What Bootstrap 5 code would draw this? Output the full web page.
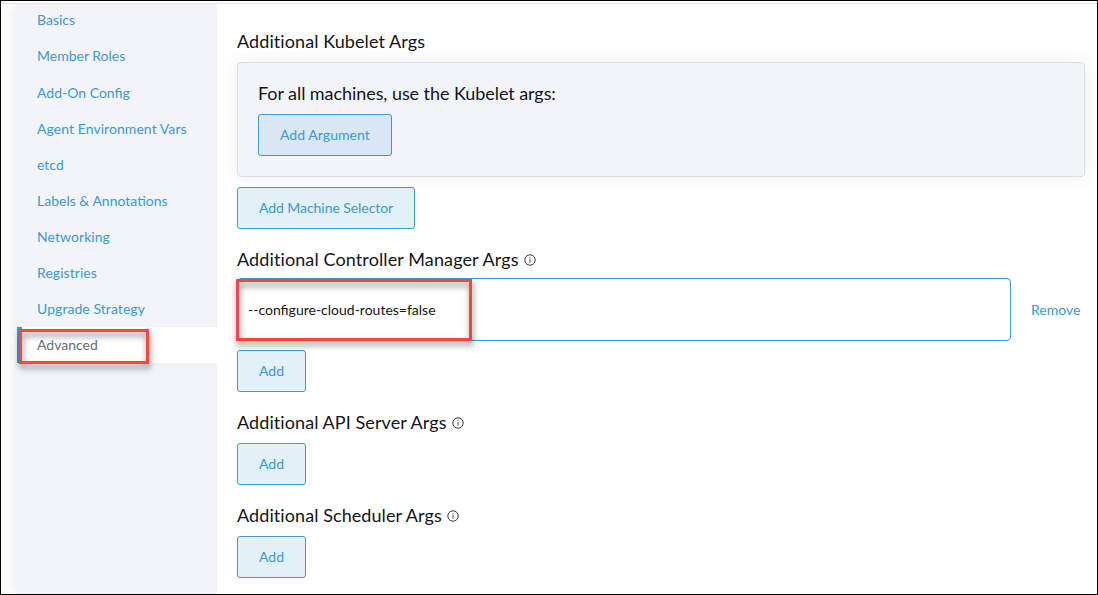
<!DOCTYPE html>
<html lang="en">
<head>
<meta charset="utf-8">
<meta name="viewport" content="width=device-width, initial-scale=1">
<title>Cluster Configuration - Advanced</title>
<link href="https://cdn.jsdelivr.net/npm/bootstrap@5.3.0/dist/css/bootstrap.min.css" rel="stylesheet">
<style>
  body { font-family: Lato, "Liberation Sans", sans-serif; font-size: 14px; color: #141419; line-height: 21px; }
  .frame { height: 595px; border: 1px solid #000; }
  .top-rule { height: 1px; margin-top: 2px; background: #e9dfec; flex: none; }
  .side-tabs { width: 200px; margin-left: 16px; background: #f3f4fa; box-shadow: 0 0 20px rgba(0,0,0,.11); clip-path: inset(0 0 0 -16px); }
  .side-tabs .nav-link { height: 36px; padding: 0 0 0 20px; line-height: 36px; color: #3d98d3; }
  .side-tabs .nav-link:first-child { margin-top: -1px; }
  .side-tabs .nav-link.early { line-height: 34px; }
  .side-tabs .nav-link.wide { letter-spacing: .06px; }
  .side-tabs .nav-link.active { background: #fff; color: #6c6c76; border-left: 5px solid #3d98d3; padding-left: 15px; margin-top: 0; }
  .pane { padding: 26px 12px 0 20px; }
  .pane h3 { font-size: 18px; font-weight: 400; line-height: 22px; margin: 0; letter-spacing: .08px; }
  .pane h3 svg { width: 12px; height: 12px; margin: 2px 0 0 5px; flex: none; }
  .pane .arg-title { letter-spacing: .11px; }
  .machine-box { height: 115px; margin-top: 10px; padding: 19px 20px; background: #f3f4fa; border: 1px solid #dcdee7; border-radius: 4px; box-shadow: 0 0 20px rgba(0,0,0,.08); }
  .machine-box h3 { letter-spacing: -.07px; margin-bottom: 10px; }
  .btn-soft { --bs-btn-color: #3d98d3; --bs-btn-bg: #e2f0f8; --bs-btn-border-color: #3d98d3; --bs-btn-hover-color: #fff; --bs-btn-hover-bg: #3d98d3; --bs-btn-font-size: 14px; --bs-btn-padding-x: 21px; --bs-btn-padding-y: 0; --bs-btn-border-radius: 3px; display: block; height: 42px; line-height: 40px; margin-top: 10px; }
  .btn-inner { --bs-btn-bg: #d9e7f4; letter-spacing: .05px; margin-top: 0; }
  .btn-selector { letter-spacing: -.06px; }
  .arg-row + .btn-soft { margin-top: 9px; }
  .arg-input { height: 63px; border: 1px solid #3d98d3; border-radius: 4px; padding: 0 10px; font-size: 14px; color: #141419; }
  .remove-link { width: 74px; padding-left: 20px; color: #3d98d3; }
  .section { margin-top: 19px; }
  .callout { position: absolute; border: 3px solid #ff4343; filter: drop-shadow(1px 4px 3px rgba(0,0,0,.5)); pointer-events: none; }
  .callout-tab { left: 2px; top: 2px; width: 130px; height: 35px; }
  .callout-arg { left: -1px; top: 1px; width: 236px; height: 62px; }
</style>
</head>
<body>
<main class="frame d-flex flex-column overflow-hidden bg-white">
  <div class="top-rule"></div>
  <div class="d-flex flex-grow-1">
    <nav class="side-tabs nav flex-column flex-nowrap flex-shrink-0">
      <a class="nav-link early" href="#">Basics</a>
      <a class="nav-link early" href="#">Member Roles</a>
      <a class="nav-link" href="#">Add-On Config</a>
      <a class="nav-link wide" href="#">Agent Environment Vars</a>
      <a class="nav-link" href="#">etcd</a>
      <a class="nav-link" href="#">Labels &amp; Annotations</a>
      <a class="nav-link wide" href="#">Networking</a>
      <a class="nav-link wide" href="#">Registries</a>
      <a class="nav-link wide" href="#">Upgrade Strategy</a>
      <div class="position-relative">
        <a class="nav-link active" href="#">Advanced</a>
        <span class="callout callout-tab"></span>
      </div>
    </nav>
    <div class="pane flex-grow-1">
      <h3>Additional Kubelet Args</h3>
      <div class="machine-box">
        <h3>For all machines, use the Kubelet args:</h3>
        <button class="btn btn-soft btn-inner">Add Argument</button>
      </div>
      <button class="btn btn-soft btn-selector">Add Machine Selector</button>

      <section class="section">
        <h3 class="arg-title d-flex align-items-center">Additional Controller Manager Args
          <svg viewBox="0 0 12 12" fill="none" stroke="#3b3b45"><circle cx="6" cy="6" r="5.2"/><path d="M6 5.2v3.4M6 3.2v1.1"/></svg></h3>
        <div class="arg-row d-flex align-items-center position-relative mt-2">
          <input class="arg-input flex-grow-1" value="--configure-cloud-routes=false" aria-label="Argument">
          <a class="remove-link text-decoration-none" href="#">Remove</a>
          <span class="callout callout-arg"></span>
        </div>
        <button class="btn btn-soft">Add</button>
      </section>
      <section class="section">
        <h3 class="d-flex align-items-center">Additional API Server Args
          <svg viewBox="0 0 12 12" fill="none" stroke="#3b3b45"><circle cx="6" cy="6" r="5.2"/><path d="M6 5.2v3.4M6 3.2v1.1"/></svg></h3>
        <button class="btn btn-soft">Add</button>
      </section>
      <section class="section">
        <h3 class="d-flex align-items-center">Additional Scheduler Args
          <svg viewBox="0 0 12 12" fill="none" stroke="#3b3b45"><circle cx="6" cy="6" r="5.2"/><path d="M6 5.2v3.4M6 3.2v1.1"/></svg></h3>
        <button class="btn btn-soft">Add</button>
      </section>
    </div>
  </div>
</main>
<script src="https://cdn.jsdelivr.net/npm/bootstrap@5.3.0/dist/js/bootstrap.bundle.min.js"></script>
</body>
</html>
